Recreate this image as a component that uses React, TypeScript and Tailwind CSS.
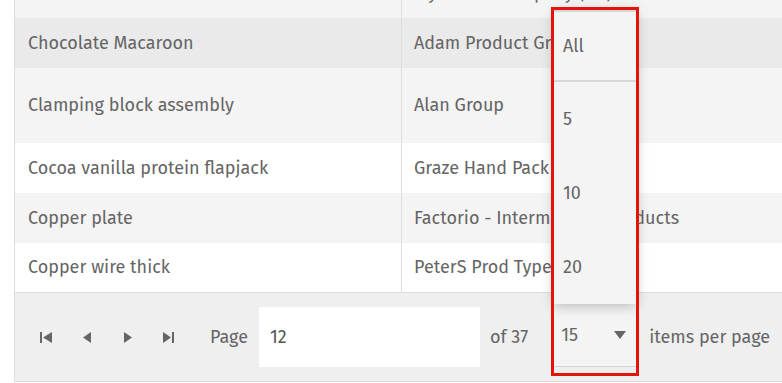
import React from "react";

const rows = [
  { a: "Cashew nuts", b: "Ivy Drinks Company (UK)", h: "h-[50px] -mt-[32px]", bg: "bg-[#f4f4f4]" },
  { a: "Chocolate Macaroon", b: "Adam Product Group", h: "h-[50px]", bg: "bg-[#eaeaea]" },
  { a: "Clamping block assembly", b: "Alan Group", h: "h-[75px]", bg: "bg-[#f4f4f4]" },
  { a: "Cocoa vanilla protein flapjack", b: "Graze Hand Pack", h: "h-[50px]", bg: "bg-white" },
  { a: "Copper plate", b: "Factorio - Intermediate products", h: "h-[50px]", bg: "bg-[#f4f4f4]" },
  { a: "Copper wire thick", b: "PeterS Prod Type", h: "h-[49px]", bg: "bg-white" },
];

function Tri({ dir }: { dir: "l" | "r" }) {
  return (
    <svg width="8" height="11" viewBox="0 0 8 11">
      {dir === "l" ? <polygon points="8,0 8,11 0,5.5" fill="#656565" /> : <polygon points="0,0 0,11 8,5.5" fill="#656565" />}
    </svg>
  );
}

export default function App() {
  return (
    <div
      className="relative w-[782px] h-[383px] overflow-hidden bg-white text-[#656565] text-[18px]"
      style={{ fontFamily: '"Fira Sans", "Noto Sans", sans-serif' }}
    >
      <div className="ml-[14px] border-l border-[#dcdcdc]">
        <div className="overflow-hidden">
          {rows.map((r, i) => (
            <div key={i} className={`flex ${r.h} ${r.bg}`}>
              <div className="w-[386px] shrink-0 flex items-center pl-[13px] whitespace-nowrap">{r.a}</div>
              <div className="flex-1 border-l border-[#dedede] flex items-center pl-[12px] whitespace-nowrap">{r.b}</div>
            </div>
          ))}
        </div>
        <div className="h-[90px] border-t border-[#dcdcdc] border-b bg-[#efefef] flex items-center">
          <div className="flex items-center ml-[11px] shrink-0">
            <div className="w-[40px] flex justify-center">
              <svg width="12" height="11" viewBox="0 0 12 11">
                <rect x="0" y="0" width="2" height="11" fill="#656565" />
                <polygon points="12,0 12,11 3,5.5" fill="#656565" />
              </svg>
            </div>
            <div className="w-[42px] flex justify-center">
              <Tri dir="l" />
            </div>
            <div className="w-[40px] flex justify-center">
              <Tri dir="r" />
            </div>
            <div className="w-[40px] flex justify-center">
              <svg width="11" height="11" viewBox="0 0 11 11">
                <polygon points="0,0 0,11 8,5.5" fill="#656565" />
                <rect x="9" y="0" width="2" height="11" fill="#656565" />
              </svg>
            </div>
          </div>
          <span className="ml-[22px] shrink-0">Page</span>
          <div className="ml-[11px] w-[221px] shrink-0 h-[60px] bg-white flex items-center pl-[11px] text-[#555]">12</div>
          <span className="ml-[10px] shrink-0 whitespace-nowrap">of 37</span>
          <div className="ml-[24px] w-[84px] shrink-0 h-[63px] bg-[#f4f4f4] border-b border-[#d6d6d6] flex items-center justify-between pl-[9px] pr-[10px] mt-[-3px]">
            <span>15</span>
            <svg width="12" height="8" viewBox="0 0 12 8">
              <polygon points="0,0 12,0 6,8" fill="#656565" />
            </svg>
          </div>
          <span className="ml-[13px] whitespace-nowrap">items per page</span>
        </div>
      </div>

      {/* dropdown popup */}
      <div className="absolute left-[554px] top-[10px] w-[82px] h-[294px] bg-[#f4f4f4] border-t-2 border-[#d6d6d6] shadow-[0_2px_12px_rgba(0,0,0,0.25)] flex flex-col">
        <div className="h-[70px] flex items-center pl-[9px] border-b-2 border-[#d8d8d8]">All</div>
        <div className="h-[74px] flex items-center pl-[9px]">5</div>
        <div className="h-[74px] flex items-center pl-[9px]">10</div>
        <div className="h-[74px] flex items-center pl-[9px]">20</div>
      </div>

      {/* highlight box */}
      <div className="absolute left-[551px] top-[7px] w-[88px] h-[369px] border-[3px] border-[#e3140b]" />
    </div>
  );
}
